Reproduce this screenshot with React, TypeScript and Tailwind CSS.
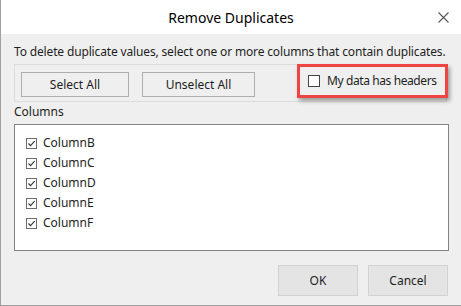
import React from "react";

const font = { fontFamily: '"Noto Sans", "Open Sans", sans-serif' };

function CheckBox({ checked }: { checked: boolean }) {
  return (
    <span className="flex h-[11px] w-[11px] items-center justify-center border border-[#6d6d6d] bg-white">
      {checked && (
        <svg width="9" height="9" viewBox="0 0 9 9">
          <path d="M1.5 4.5 L3.6 6.6 L7.6 2.2" fill="none" stroke="#3c3c3c" strokeWidth="1.2" />
        </svg>
      )}
    </span>
  );
}

export default function App() {
  const cols = ["ColumnB", "ColumnC", "ColumnD", "ColumnE", "ColumnF"];
  return (
    <div
      className="flex h-[306px] w-[461px] flex-col border-b border-l border-[#a0a0a0] bg-[#efefef] text-[12px] text-[#1e1e1e]"
      style={font}
    >
      <div className="grid h-[34px] shrink-0 grid-cols-[1fr_auto_1fr] items-center bg-white">
        <div />
        <div className="text-[14px] text-black">Remove Duplicates</div>
        <div className="flex justify-end pr-[12px]">
          <svg width="11" height="11" viewBox="0 0 11 11">
            <path d="M0.5 0.5 L10.5 10.5 M10.5 0.5 L0.5 10.5" stroke="#555" strokeWidth="1.1" />
          </svg>
        </div>
      </div>
      <div className="flex flex-1 flex-col px-[13px]">
        <div className="mt-[10px] h-[16px] leading-[16px] tracking-[-0.15px]">
          To delete duplicate values, select one or more columns that contain duplicates.
        </div>
        <div className="relative mt-[4px] flex h-[38px] w-[433px] items-start border border-[#dcdcdc] pl-[6px] pt-[7px]">
          <button className="h-[25px] w-[108px] border border-[#adadad] bg-[#efefef] text-[12px] leading-none">
            Select All
          </button>
          <button className="ml-[13px] h-[25px] w-[113px] border border-[#adadad] bg-[#efefef] text-[12px] leading-none">
            Unselect All
          </button>
          <div className="absolute left-[282px] top-[-1px] flex h-[34px] w-[151px] items-center border-[3px] border-[#ef4444] pl-[8px] shadow-[2px_3px_4px_rgba(0,0,0,0.35)]">
            <span className="h-[12px] w-[12px] border border-[#444] bg-white" />
            <span className="ml-[7px] tracking-[-0.4px]">My data has headers</span>
          </div>
        </div>
        <div className="mt-[2px] h-[16px] leading-[16px]">Columns</div>
        <div className="mt-[4px] flex h-[127px] w-[435px] flex-col border border-[#828282] bg-white pl-[11px] pt-[8px]">
          {cols.map((c) => (
            <div key={c} className="flex h-[20px] items-center">
              <CheckBox checked />
              <span className="ml-[6px]">{c}</span>
            </div>
          ))}
        </div>
        <div className="mt-[14px] flex justify-end gap-[10px] pr-[0px]">
          <button className="h-[31px] w-[80px] border border-[#d2d2d2] bg-[#e4e4e4] text-[12px]">OK</button>
          <button className="h-[31px] w-[80px] border border-[#d2d2d2] bg-[#e4e4e4] text-[12px]">Cancel</button>
        </div>
      </div>
    </div>
  );
}
